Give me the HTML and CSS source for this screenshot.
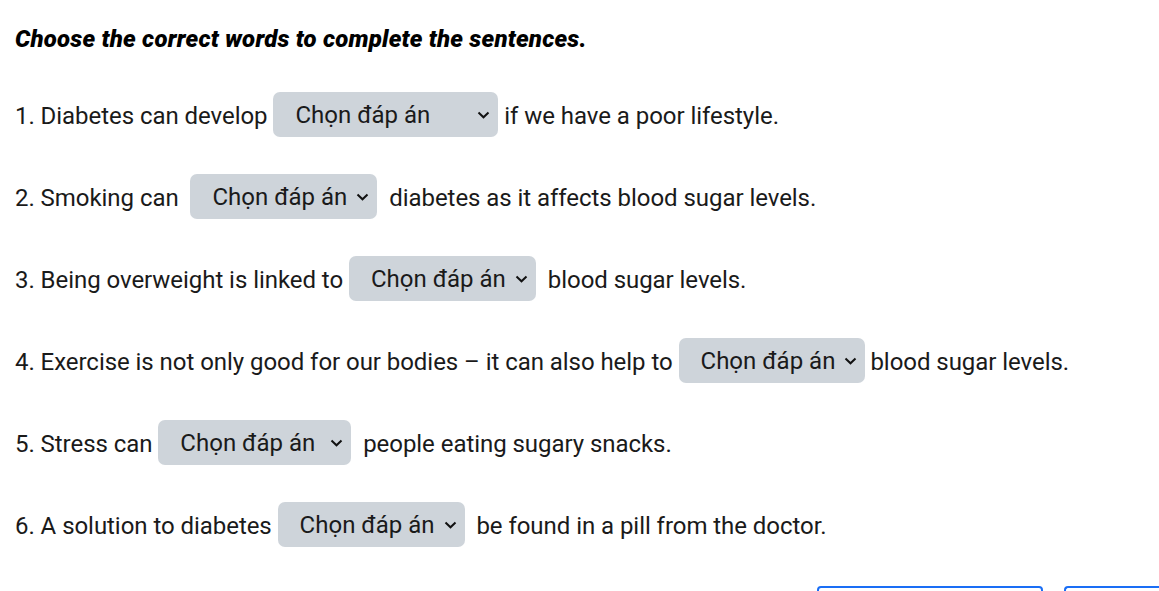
FILE: index.html
```html
<!DOCTYPE html>
<html lang="vi">
<head>
<meta charset="utf-8">
<title>Quiz</title>
<link rel="stylesheet" href="styles.css">
</head>
<body>
<main class="quiz">
  <p class="title">Choose the correct words to complete the sentences.</p>
  <div class="row">1. Diabetes can develop <select class="sel w225"><option>Chọn đáp án</option></select> if we have a poor lifestyle.</div>
  <div class="row">2. Smoking can &nbsp;<select class="sel w187"><option>Chọn đáp án</option></select> &nbsp;diabetes as it affects blood sugar levels.</div>
  <div class="row">3. Being overweight is linked to <select class="sel w187"><option>Chọn đáp án</option></select> &nbsp;blood sugar levels.</div>
  <div class="row">4. Exercise is not only good for our bodies – it can also help to <select class="sel w186"><option>Chọn đáp án</option></select> blood sugar levels.</div>
  <div class="row">5. Stress can <select class="sel w193"><option>Chọn đáp án</option></select> &nbsp;people eating sugary snacks.</div>
  <div class="row">6. A solution to diabetes <select class="sel w187"><option>Chọn đáp án</option></select> &nbsp;be found in a pill from the doctor.</div>
  <div class="actions">
    <button class="btn btn-wide" type="button">Kiểm tra</button>
    <button class="btn btn-narrow" type="button">Làm lại</button>
  </div>
</main>
</body>
</html>
```

FILE: styles.css
```css
html, body {
  margin: 0;
  padding: 0;
  overflow: hidden;
  background: #ffffff;
}
body {
  font-family: Roboto, "Noto Sans", sans-serif;
  font-size: 24px;
  color: #1a1a1a;
}
.quiz {
  padding: 27px 15px 0 15px;
}
.title {
  margin: 0 0 43px 0;
  font-weight: 900;
  font-style: italic;
  font-size: 24px;
  line-height: 24px;
  letter-spacing: 0.2px;
  color: #000000;
}
.row {
  height: 45px;
  line-height: 45px;
  margin-bottom: 37px;
  white-space: nowrap;
  letter-spacing: -0.05px;
}
.sel {
  -webkit-appearance: none;
  appearance: none;
  vertical-align: middle;
  height: 45px;
  margin: 0;
  padding: 0 30px 0 22px;
  border: none;
  border-radius: 7px;
  background-color: #ced4da;
  background-image: url("data:image/svg+xml,%3Csvg xmlns='http://www.w3.org/2000/svg' width='13' height='8' viewBox='0 0 13 8'%3E%3Cpath d='M1.5 1.5 6.5 6.3l5-4.8' fill='none' stroke='%23111' stroke-width='2'/%3E%3C/svg%3E");
  background-repeat: no-repeat;
  background-position: right 8px center;
  font-family: Roboto, "Noto Sans", sans-serif;
  font-size: 24px;
  color: #1a1a1a;
  box-sizing: border-box;
  position: relative;
  top: -3px;
}
.w225 { width: 225px; }
.w193 { width: 193px; }
.w187 { width: 187px; }
.w186 { width: 186px; }
.actions {
  display: flex;
  justify-content: flex-end;
  gap: 21px;
  margin-right: -15px;
  margin-top: 11px;
}
.btn {
  height: 44px;
  padding: 0;
  border: 2px solid #1a6ef5;
  border-radius: 4px;
  background: #ffffff;
  color: #1a6ef5;
  font-family: Roboto, sans-serif;
  font-size: 18px;
}
.btn-wide { width: 226px; }
.btn-narrow { width: 95px; border-right: none; border-radius: 4px 0 0 4px; }
```
